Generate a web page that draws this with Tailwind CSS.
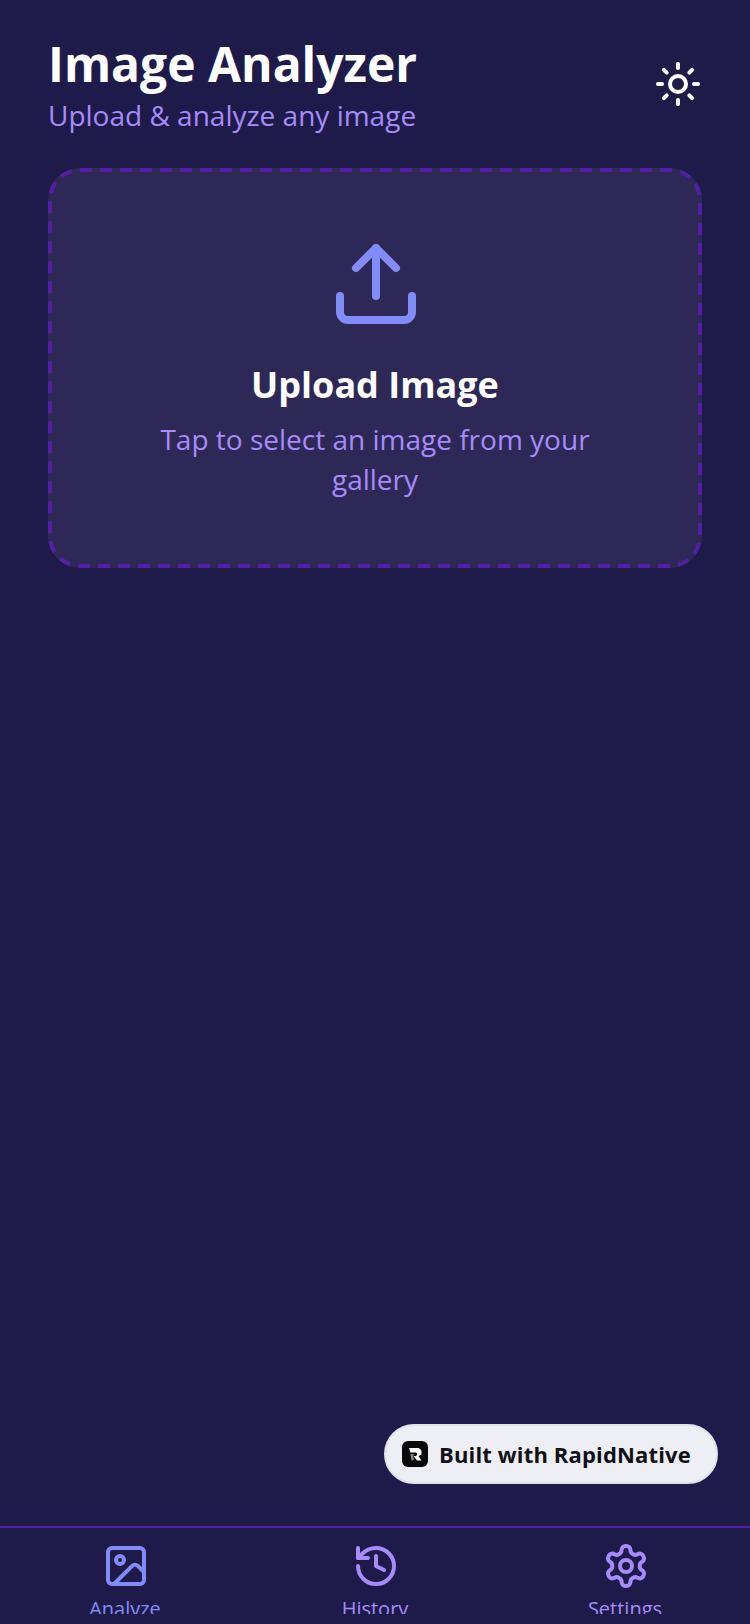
<!DOCTYPE html>
<html>
<head>
<meta charset="utf-8">
<script src="https://cdn.jsdelivr.net/npm/@tailwindcss/browser@4"></script>
</head>
<body class="m-0">
<div class="relative flex flex-col w-[750px] h-[1624px] overflow-hidden bg-[#1e1b4b] font-['Open_Sans',sans-serif]">
  <main class="flex-1 px-12 pt-8">
    <header class="flex items-center justify-between">
      <div>
        <h1 class="text-[48px] leading-[64px] font-bold text-white">Image Analyzer</h1>
        <p class="-mt-px mb-px text-[28px] leading-[40px] text-[#a78bfa]">Upload &amp; analyze any image</p>
      </div>
      <svg class="w-12 h-12 text-white" viewBox="0 0 24 24" fill="none" stroke="currentColor" stroke-width="2" stroke-linecap="round" stroke-linejoin="round"><circle cx="12" cy="12" r="4"/><path d="M12 2v2"/><path d="M12 20v2"/><path d="m4.93 4.93 1.41 1.41"/><path d="m17.66 17.66 1.41 1.41"/><path d="M2 12h2"/><path d="M20 12h2"/><path d="m6.34 17.66-1.41 1.41"/><path d="m19.07 4.93-1.41 1.41"/></svg>
    </header>
    <section class="relative mt-8 h-[400px] flex flex-col items-center p-[68px] rounded-[32px] bg-[#2e2856]">
      <svg class="absolute inset-0 w-full h-full" viewBox="0 0 654 400" fill="none"><rect x="2" y="2" width="650" height="396" rx="30" stroke="#5320a5" stroke-width="4" stroke-dasharray="12 8"/></svg>
      <svg class="w-24 h-24 shrink-0 ml-[2px] text-[#818cf8]" viewBox="0 0 24 24" fill="none" stroke="currentColor" stroke-width="2" stroke-linecap="round" stroke-linejoin="round"><path d="M21 15v4a2 2 0 0 1-2 2H5a2 2 0 0 1-2-2v-4"/><polyline points="17 8 12 3 7 8"/><line x1="12" y1="3" x2="12" y2="15"/></svg>
      <h2 class="mt-[29px] text-[36px] leading-[48px] font-bold text-white text-center whitespace-nowrap">Upload Image</h2>
      <p class="mt-[10px] text-[28px] leading-[40px] text-[#a78bfa] text-center">Tap to select an image from your gallery</p>
    </section>
  </main>
  <nav class="h-[98px] border-t-2 border-[#5320a5] bg-[#1e1b4b]">
    <div class="grid grid-cols-3 h-[86px] overflow-hidden pt-[14px]">
      <div class="flex flex-col items-center text-[#818cf8]">
        <svg class="w-12 h-12 shrink-0 ml-[2px]" viewBox="0 0 24 24" fill="none" stroke="currentColor" stroke-width="2" stroke-linecap="round" stroke-linejoin="round"><rect x="3" y="3" width="18" height="18" rx="2"/><circle cx="9" cy="9" r="2"/><path d="m21 15-3.086-3.086a2 2 0 0 0-2.828 0L6 21"/></svg>
        <span class="mt-1 text-[20px] leading-[30px]">Analyze</span>
      </div>
      <div class="flex flex-col items-center text-[#a78bfa]">
        <svg class="w-12 h-12 shrink-0 ml-[2px]" viewBox="0 0 24 24" fill="none" stroke="currentColor" stroke-width="2" stroke-linecap="round" stroke-linejoin="round"><path d="M3 12a9 9 0 1 0 9-9 9.75 9.75 0 0 0-6.74 2.74L3 8"/><path d="M3 3v5h5"/><path d="M12 7v5l4 2"/></svg>
        <span class="mt-1 text-[20px] leading-[30px]">History</span>
      </div>
      <div class="flex flex-col items-center text-[#a78bfa]">
        <svg class="w-12 h-12 shrink-0 ml-[2px]" viewBox="0 0 24 24" fill="none" stroke="currentColor" stroke-width="2" stroke-linecap="round" stroke-linejoin="round"><path d="M12.22 2h-.44a2 2 0 0 0-2 2v.18a2 2 0 0 1-1 1.73l-.43.25a2 2 0 0 1-2 0l-.15-.08a2 2 0 0 0-2.73.73l-.22.38a2 2 0 0 0 .73 2.73l.15.1a2 2 0 0 1 1 1.72v.51a2 2 0 0 1-1 1.74l-.15.09a2 2 0 0 0-.73 2.73l.22.38a2 2 0 0 0 2.73.73l.15-.08a2 2 0 0 1 2 0l.43.25a2 2 0 0 1 1 1.73V20a2 2 0 0 0 2 2h.44a2 2 0 0 0 2-2v-.18a2 2 0 0 1 1-1.73l.43-.25a2 2 0 0 1 2 0l.15.08a2 2 0 0 0 2.73-.73l.22-.39a2 2 0 0 0-.73-2.73l-.15-.08a2 2 0 0 1-1-1.74v-.5a2 2 0 0 1 1-1.74l.15-.09a2 2 0 0 0 .73-2.73l-.22-.38a2 2 0 0 0-2.73-.73l-.15.08a2 2 0 0 1-2 0l-.43-.25a2 2 0 0 1-1-1.73V4a2 2 0 0 0-2-2z"/><circle cx="12" cy="12" r="3"/></svg>
        <span class="mt-1 text-[20px] leading-[30px]">Settings</span>
      </div>
    </div>
  </nav>
  <div class="absolute left-[384px] top-[1424px] w-[334px] h-[60px] flex items-center gap-[11px] pl-[16px] rounded-full border-2 border-[#e2e2ee] bg-[#eeeff5]">
    <svg class="w-[26px] h-[26px] shrink-0" viewBox="0 0 26 26"><rect width="26" height="26" rx="6" fill="#0a0a0a"/><path d="M7 7h10l2.5 2.5v4L16.5 15l3 4.5h-4.5L11.5 15h2.5l1-1v-1.5L14 11.5H8.5z" fill="#fff"/><path d="M8.5 13h3v6.5h-2z" fill="#888"/></svg>
    <span class="text-[22px] leading-[32px] font-bold tracking-[0.15px] text-[#111118] whitespace-nowrap">Built with RapidNative</span>
  </div>
</div>
</body>
</html>
